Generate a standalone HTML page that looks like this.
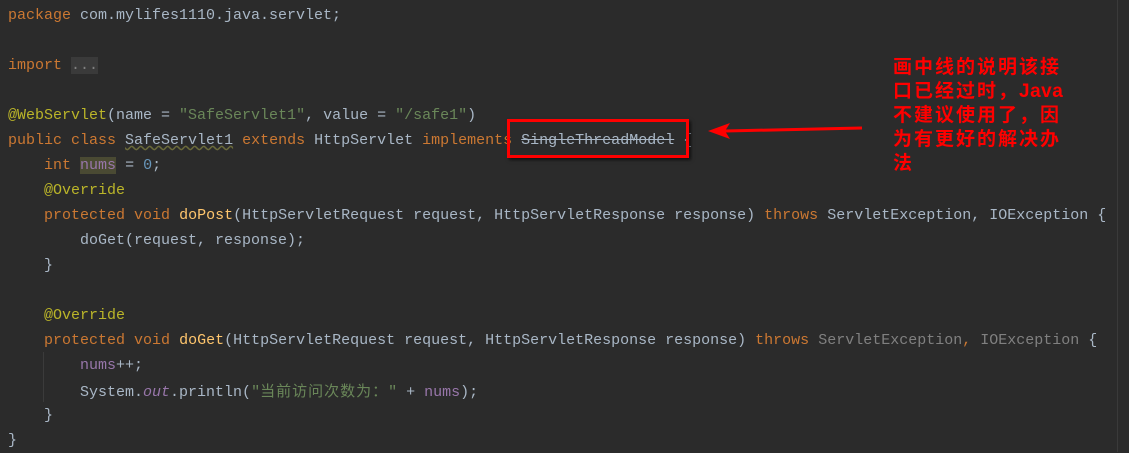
<!DOCTYPE html>
<html><head><meta charset="utf-8"><style>
body{margin:0;width:1129px;height:452px;background:#2b2b2b;overflow:hidden;position:relative;font-family:"Liberation Mono",monospace;font-size:15px;color:#a9b7c6}
.l{position:absolute;left:8px;height:25px;line-height:25px;white-space:pre}
.k{color:#cc7832}.s{color:#6a8759}.a{color:#bbb529}.n{color:#6897bb}.f{color:#9876aa}.m{color:#ffc66d}.g{color:#808080}
.cj{font-family:"Noto Sans CJK SC",sans-serif;letter-spacing:1px}
.note{position:absolute;left:893px;top:56px;color:#f00;font-family:"Liberation Sans","Noto Sans CJK SC",sans-serif;font-weight:bold;font-size:19px;line-height:24px;letter-spacing:2px;white-space:nowrap}
.note b{letter-spacing:0.5px}
</style></head><body>
<div style="position:absolute;left:1117px;top:0;width:1px;height:452px;background:#3a3a3a"></div>
<div style="position:absolute;left:43px;top:352px;width:1px;height:50px;background:#3b3b3b"></div>
<div class="l" style="top:3px"><span class="k">package</span> com.mylifes1110.java.servlet;</div>
<div class="l" style="top:53px"><span class="k">import</span> <span class="g" style="background:#3a3a3a">...</span></div>
<div class="l" style="top:103px"><span class="a">@WebServlet</span>(name = <span class="s">"SafeServlet1"</span>, value = <span class="s">"/safe1"</span>)</div>
<div class="l" style="top:128px"><span class="k">public class</span> <span style="text-decoration:underline wavy #6a6a3a">SafeServlet1</span> <span class="k">extends</span> HttpServlet <span class="k">implements</span> <span style="text-decoration:line-through">SingleThreadModel</span> {</div>
<div class="l" style="top:153px">    <span class="k">int</span> <span class="f" style="background:#4a4a33">nums</span> = <span class="n">0</span>;</div>
<div class="l" style="top:178px">    <span class="a">@Override</span></div>
<div class="l" style="top:203px">    <span class="k">protected void</span> <span class="m">doPost</span>(HttpServletRequest request, HttpServletResponse response) <span class="k">throws</span> ServletException, IOException {</div>
<div class="l" style="top:228px">        doGet(request, response);</div>
<div class="l" style="top:253px">    }</div>
<div class="l" style="top:303px">    <span class="a">@Override</span></div>
<div class="l" style="top:328px">    <span class="k">protected void</span> <span class="m">doGet</span>(HttpServletRequest request, HttpServletResponse response) <span class="k">throws</span> <span class="g">ServletException</span><span class="k">,</span> <span class="g">IOException</span> {</div>
<div class="l" style="top:353px">        <span class="f">nums</span>++;</div>
<div class="l" style="top:378px">        System.<span class="f" style="font-style:italic">out</span>.println(<span class="s">"<span class="cj">当前访问次数为：</span>"</span> + <span class="f">nums</span>);</div>
<div class="l" style="top:403px">    }</div>
<div class="l" style="top:428px">}</div>
<div style="position:absolute;left:507px;top:119px;width:176px;height:33px;border:3px solid #f00;box-shadow:2px 2px 3px rgba(0,0,0,.6)"></div>
<svg style="position:absolute;left:0;top:0" width="1129" height="452"><line x1="862" y1="128" x2="725" y2="131" stroke="#f00" stroke-width="3"/><polygon points="708,131 730,123 725,131 730,139" fill="#f00"/></svg>
<div class="note">画中线的说明该接<br>口已经过时，<b>Java</b><br>不建议使用了，因<br>为有更好的解决办<br>法</div>
</body></html>
